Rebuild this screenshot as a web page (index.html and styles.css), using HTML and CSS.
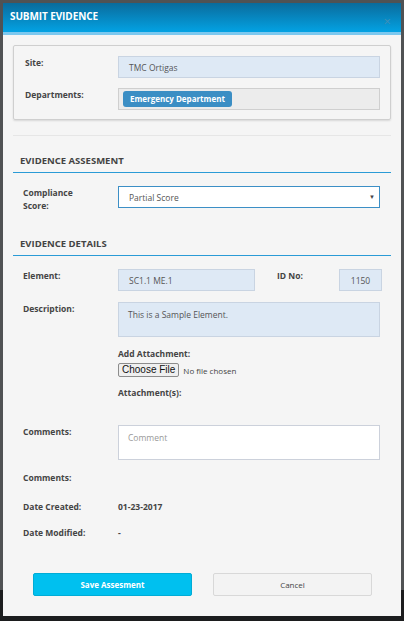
FILE: index.html
```html
<!DOCTYPE html>
<html>
<head>
<meta charset="utf-8">
<link rel="stylesheet" href="styles.css">
</head>
<body>
<div class="backdrop">
  <div class="modal">
    <div class="modal-header">
      <span class="modal-title">SUBMIT EVIDENCE</span>
      <span class="close">×</span>
    </div>
    <div class="modal-body">
      <div class="card">
        <div class="row">
          <div class="label">Site:</div>
          <div class="field input blue">TMC Ortigas</div>
        </div>
        <div class="row">
          <div class="label">Departments:</div>
          <div class="field tags"><span class="tag">Emergency Department</span></div>
        </div>
      </div>
      <div class="divider"></div>

      <h3 class="section-title">EVIDENCE ASSESMENT</h3>
      <div class="row compliance">
        <div class="label">Compliance<br>Score:</div>
        <div class="field select">Partial Score<span class="caret">▼</span></div>
      </div>

      <h3 class="section-title details">EVIDENCE DETAILS</h3>
      <div class="row element-row">
        <div class="label">Element:</div>
        <div class="field input blue element">SC1.1 ME.1</div>
        <div class="label idlabel">ID No:</div>
        <div class="field input blue idno">1150</div>
      </div>
      <div class="row desc-row">
        <div class="label">Description:</div>
        <div class="field textarea blue">This is a Sample Element.</div>
      </div>
      <div class="attach">
        <div class="label">Add Attachment:</div>
        <div class="file"><span class="file-btn">Choose File</span><span class="file-text">No file chosen</span></div>
        <div class="label attach-list">Attachment(s):</div>
      </div>
      <div class="row comment-row">
        <div class="label">Comments:</div>
        <div class="field textarea white placeholder">Comment</div>
      </div>
      <div class="row info-row first">
        <div class="label">Comments:</div>
      </div>
      <div class="row info-row second">
        <div class="label">Date Created:</div>
        <div class="value">01-23-2017</div>
      </div>
      <div class="row info-row third">
        <div class="label">Date Modified:</div>
        <div class="value">-</div>
      </div>
      <div class="buttons">
        <button class="btn primary">Save Assesment</button>
        <button class="btn default">Cancel</button>
      </div>
    </div>
  </div>
</div>
</body>
</html>
```

FILE: styles.css
```css
* { box-sizing: border-box; }
html, body { margin: 0; padding: 0; }
body {
  width: 404px;
  height: 621px;
  overflow: hidden;
  background: #4d4f51;
  font-family: "Open Sans", "Noto Sans", sans-serif;
}
.backdrop {
  height: 621px;
  padding: 3px 3px 0 3px;
  background: linear-gradient(to bottom, #505254 0, #505254 590px, #1c1d1e 590px);
}
.modal {
  width: 398px;
  height: 613px;
  background: #f5f5f5;
  display: flex;
  flex-direction: column;
}
.modal-header {
  height: 29px;
  box-sizing: content-box;
  background: linear-gradient(to bottom, #0a6b9c 0%, #03a2e3 100%);
  border-bottom: 3px solid #7cc8ef;
  display: flex;
  align-items: center;
  justify-content: space-between;
  padding: 0 10px 0 7px;
}
.modal-title {
  color: #fff;
  font-weight: 700;
  font-size: 10px;
  letter-spacing: -0.1px;
  margin-top: -3px;
}
.close {
  color: #3f8fb8;
  font-size: 13px;
  margin-top: 6px;
}
.modal-body {
  padding: 10px 10px 0 10px;
}
.card {
  border: 1px solid #cfcfcf;
  border-radius: 2px;
  box-shadow: 0 1px 2px rgba(0,0,0,0.12);
  padding: 10px 10px 9px 11px;
  display: flex;
  flex-direction: column;
  gap: 10px;
}
.row {
  display: flex;
  align-items: flex-start;
}
.label {
  font-size: 8.5px;
  font-weight: 700;
  color: #444;
  line-height: 13px;
  flex-shrink: 0;
}
.card .label { width: 93px; }
.field {
  height: 22px;
  font-size: 8.5px;
  color: #555;
  display: flex;
  align-items: center;
}
.input { padding-left: 10px; }
.blue {
  background: #dee9f5;
  border: 1px solid #c9d4e2;
}
.card .field { flex: 1; }
.tags {
  background: #ececec;
  border: 1px solid #cfcfcf;
  padding-left: 4px;
}
.tag {
  background: #3b8ec4;
  color: #fff;
  font-weight: 700;
  font-size: 8px;
  border-radius: 3px;
  height: 16px;
  line-height: 16px;
  padding: 0 7px;
}
.divider {
  height: 1px;
  background: #e6e6e6;
  margin: 15px 0 0 0;
}
.section-title {
  margin: 0;
  font-size: 9.5px;
  font-weight: 700;
  color: #444;
  padding: 18px 0 5px 7px;
  border-bottom: 1px solid #2a9bd6;
  line-height: 13px;
}
.compliance { padding: 13px 0 0 10px; }
.compliance .label { width: 95px; }
.select {
  flex: 1;
  margin-right: 11px;
  background: #fff;
  border: 1px solid #3c8fc6;
  padding-left: 10px;
  justify-content: space-between;
}
.caret { font-size: 6px; color: #444; padding-right: 4px; }
.section-title.details { padding-top: 25px; }
.element-row { padding: 13px 0 0 10px; }
.element-row .label { width: 95px; }
.element { width: 137px; }
.element-row .idlabel { width: 84px; padding-left: 22px; }
.idno { width: 43px; padding-left: 0; justify-content: center; }
.desc-row { padding: 11px 0 0 10px; }
.desc-row .label { width: 95px; }
.textarea {
  flex: 1;
  margin-right: 11px;
  height: 35px;
  align-items: flex-start;
  padding: 6px 9px;
}
.white { background: #fff; border: 1px solid #ccd1db; }
.placeholder { color: #999; }
.attach { padding: 10px 0 0 105px; }
.file { display: flex; align-items: center; margin-top: 3px; }
.file-btn {
  font-family: "Liberation Sans", Arial, sans-serif;
  font-size: 10px;
  color: #111;
  background: #efefef;
  border: 1px solid #8c8c8c;
  border-radius: 2px;
  height: 14px;
  line-height: 12px;
  padding: 0 3px;
}
.file-text { font-size: 8px; color: #444; margin-left: 4px; }
.attach-list { margin-top: 9px; }
.comment-row { padding: 26px 0 0 10px; }
.comment-row .label { width: 95px; }
.info-row { padding: 0 0 0 10px; }
.info-row .label { width: 95px; }
.info-row.first { padding-top: 11px; }
.info-row.second { padding-top: 16px; }
.info-row.third { padding-top: 13px; }
.value { font-size: 8.5px; font-weight: 700; color: #444; line-height: 13px; }
.buttons {
  display: flex;
  gap: 21px;
  padding: 34px 0 0 20px;
}
.btn {
  width: 159px;
  height: 23px;
  font-family: "Open Sans", sans-serif;
  font-size: 8px;
  border-radius: 2px;
  cursor: pointer;
}
.primary {
  background: #00c0ef;
  border: 1px solid #00acd6;
  color: #fff;
  font-weight: 700;
}
.default {
  background: #f3f3f3;
  border: 1px solid #d8d8d8;
  color: #444;
}
```
